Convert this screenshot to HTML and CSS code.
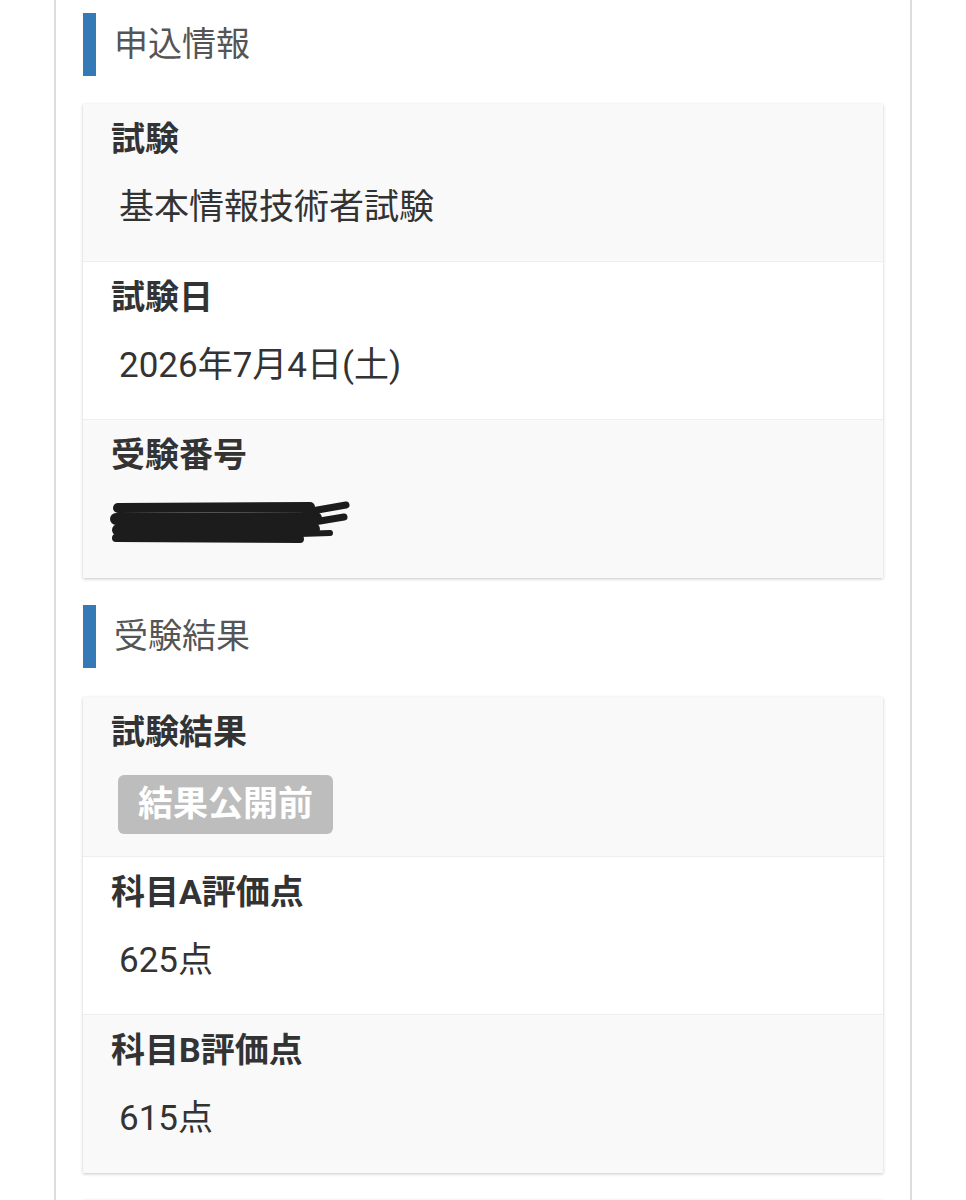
FILE: index.html
```html
<!DOCTYPE html>
<html lang="ja">
<head>
<meta charset="utf-8">
<title>受験結果</title>
<link rel="stylesheet" href="styles.css">
</head>
<body>
<div class="container">
  <h2 class="section-title">申込情報</h2>
  <div class="card">
    <div class="row striped">
      <div class="label">試験</div>
      <div class="value">基本情報技術者試験</div>
    </div>
    <div class="row">
      <div class="label">試験日</div>
      <div class="value">2026年7月4日(土)</div>
    </div>
    <div class="row striped">
      <div class="label">受験番号</div>
      <div class="value redacted">
        <svg class="scribble" width="244" height="46" viewBox="0 0 244 46">
          <g fill="none" stroke="#1c1c1c" stroke-linecap="round">
            <path d="M8 9 L200 8" stroke-width="10"/>
            <path d="M6 20 L206 19" stroke-width="12"/>
            <path d="M8 31 L204 30" stroke-width="12"/>
            <path d="M6 39 L190 40" stroke-width="8"/>
            <path d="M196 13 L236 6" stroke-width="7"/>
            <path d="M198 24 L234 18" stroke-width="7"/>
            <path d="M190 35 L220 34" stroke-width="6"/>
          </g>
        </svg>
      </div>
    </div>
  </div>

  <h2 class="section-title">受験結果</h2>
  <div class="card">
    <div class="row striped badge-row">
      <div class="label">試験結果</div>
      <div class="value"><span class="badge">結果公開前</span></div>
    </div>
    <div class="row">
      <div class="label">科目A評価点</div>
      <div class="value">625点</div>
    </div>
    <div class="row striped">
      <div class="label">科目B評価点</div>
      <div class="value">615点</div>
    </div>
  </div>

  <div class="card next-card"></div>
</div>
</body>
</html>
```

FILE: styles.css
```css
* {
  box-sizing: border-box;
}

html, body {
  margin: 0;
  padding: 0;
  background: #ffffff;
}

body {
  font-family: Roboto, "Noto Sans CJK JP", sans-serif;
  color: #333333;
  overflow: hidden;
  height: 1200px;
}

.container {
  margin-left: 54px;
  width: 858px;
  min-height: 1200px;
  border-left: 2px solid #dcdcdc;
  border-right: 2px solid #dcdcdc;
  padding: 13px 27px 0 27px;
}

.section-title {
  margin: 0 0 28px 0;
  height: 63px;
  border-left: 13px solid #337ab7;
  padding-left: 18px;
  font-size: 34px;
  font-weight: normal;
  line-height: 63px;
  color: #555555;
}

.card + .section-title {
  margin-bottom: 29px;
}

.card {
  background: #ffffff;
  box-shadow: 0 1px 3px rgba(0, 0, 0, 0.22);
  margin-bottom: 27px;
}

.row {
  padding: 15px 28px 28px 28px;
  border-bottom: 1px solid #eeeeee;
}

.row:last-child {
  border-bottom: none;
  padding-bottom: 29px;
}

.row.striped {
  background: #f9f9f9;
}

.label {
  font-size: 34px;
  font-weight: bold;
  line-height: 40px;
  color: #333333;
}

.value {
  margin-top: 24px;
  padding-left: 8px;
  font-size: 35px;
  line-height: 50px;
  color: #333333;
}

.value.redacted {
  padding-left: 0;
  height: 50px;
  line-height: 0;
}

.scribble {
  display: block;
  margin-left: -1px;
  margin-top: 5px;
}

.row.badge-row {
  padding-bottom: 22px;
}

.badge-row .value {
  margin-top: 23px;
  padding-left: 7px;
  line-height: 59px;
  height: 59px;
}

.badge {
  display: inline-block;
  height: 59px;
  padding: 0 20px;
  border-radius: 6px;
  background: #bdbdbd;
  color: #ffffff;
  font-size: 35px;
  font-weight: bold;
  line-height: 59px;
  vertical-align: top;
}

.next-card {
  height: 60px;
  border-top: 1px solid #e2e2e2;
}
```
